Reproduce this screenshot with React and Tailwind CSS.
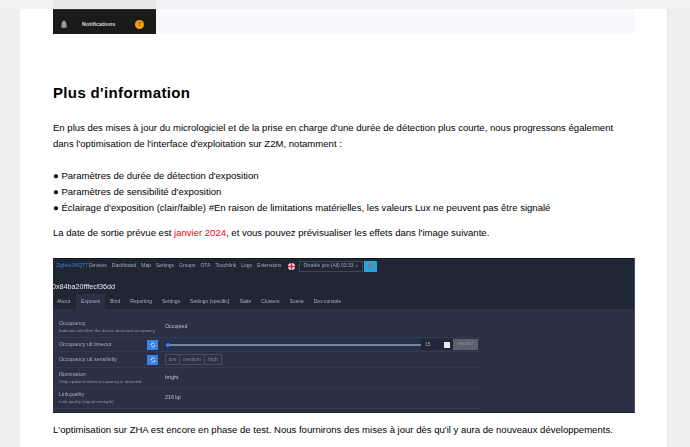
const Row = ({ h, label, sub, btn, children }) => (
  <div className={`flex items-center border-b border-[#33394f] ${h}`}>
    <div className="w-[94px] shrink-0 pl-[6px]">
      <div className="text-[5.3px] leading-[7px] whitespace-nowrap text-[#a9adb8]">{label}</div>
      {sub && <div className="text-[4.4px] leading-[7px] whitespace-nowrap text-[#9297a4]">{sub}</div>}
    </div>
    <div className="w-[11px] shrink-0">
      {btn && (
        <div className="flex h-[10px] w-[11px] items-center justify-center bg-[#3b82e6]">
          <svg width="6" height="6" viewBox="0 0 24 24" fill="none" stroke="#dfe8f8" strokeWidth="4">
            <path d="M4 12a8 8 0 0 1 14-5M20 12a8 8 0 0 1-14 5" />
          </svg>
        </div>
      )}
    </div>
    <div className="flex min-w-0 flex-1 items-center pl-[7px] pr-[3px]">{children}</div>
  </div>
);

export default function App() {
  const nav = ["Devices", "Dashboard", "Map", "Settings", "Groups", "OTA", "Touchlink", "Logs", "Extensions"];
  const tabs = ["Bind", "Reporting", "Settings", "Settings (specific)", "State", "Clusters", "Scene", "Dev console"];
  return (
    <div className="h-[447px] w-[690px] overflow-hidden bg-[#efefef] font-['Liberation_Sans',Arial,sans-serif]">
      <div className="h-[9px] bg-[#f2f2f2] px-[53px]">
        <div className="h-full w-[103px] bg-[#e8e8e8]" />
      </div>
      <div className="mx-[20px] h-[438px] w-[648px] border-r border-[#e6e6e6] bg-white px-[33px] text-black">
        <div className="flex h-[25px] w-[582px] bg-[#f8f9fd]">
          <div className="flex h-full w-[103px] items-center border-t border-[#333] bg-[#1a1a1a] pl-[6px] pt-[4px]">
            <svg width="10" height="11" viewBox="0 0 24 24" fill="#9a9a9a">
              <path d="M12 2c-1 0-2 1-2 2-3 1-4 4-4 7v5l-2 3h16l-2-3v-5c0-3-1-6-4-7 0-1-1-2-2-2zM10 20h4a2 2 0 0 1-4 0z" />
            </svg>
            <span className="ml-[13px] w-[48px] text-[5.5px] font-bold text-[#d8d8d8]">Notifications</span>
            <span className="ml-[5px] flex h-[9px] w-[9px] items-center justify-center rounded-full bg-[#f39c12] text-[6px] font-bold leading-none text-[#5a3a00]">!</span>
          </div>
        </div>

        <h2 className="mt-[50px] text-[15px] font-bold leading-[18px] tracking-[0.35px]">Plus d'information</h2>

        <p className="mt-[18px] text-[9.55px] leading-[16px] whitespace-nowrap">
          En plus des mises à jour du micrologiciel et de la prise en charge d'une durée de détection plus courte, nous progressons également
          <br />
          dans l'optimisation de l'interface d'exploitation sur Z2M, notamment :
        </p>
        <div className="mt-[16px] text-[9.55px] leading-[16px] whitespace-nowrap">
          <div>● Paramètres de durée de détection d'exposition</div>
          <div>● Paramètres de sensibilité d'exposition</div>
          <div>● Éclairage d'exposition (clair/faible) #En raison de limitations matérielles, les valeurs Lux ne peuvent pas être signalé</div>
        </div>
        <p className="mt-[9px] text-[9.55px] leading-[16px] whitespace-nowrap">
          La date de sortie prévue est <span className="text-[#f5000f]">janvier 2024</span>, et vous pouvez prévisualiser les effets dans l'image suivante.
        </p>

        <div className="mt-[17px] h-[155px] w-[582px] overflow-hidden border-r border-t border-r-[#4a5060] border-t-[#10141c] bg-[#2b3045] blur-[0.3px]">
          <div className="h-[50px] bg-[#1f2634]">
            <div className="flex h-[13px] items-center pl-[3px] pt-[1px] text-[5px] whitespace-nowrap text-[#a4a9b3]">
              <span className="w-[33px] text-[#3f7ed0]">Zigbee2MQTT</span>
              <div className="flex gap-[5px]">
                {nav.map((n) => <span key={n}>{n}</span>)}
              </div>
              <svg className="ml-[6px]" width="7" height="7" viewBox="0 0 10 10">
                <circle cx="5" cy="5" r="5" fill="#e8e8ee" />
                <path d="M4 0h2v4h4v2H6v4H4V6H0V4h4z" fill="#d9263f" />
              </svg>
              <div className="ml-[4px] flex h-[11px] w-[64px] items-center justify-between border border-[#3f4657] px-[4px]">
                <span>Disable join (All) 03:33</span><span className="text-[3px]">▾</span>
              </div>
              <div className="ml-[1px] flex h-[11px] w-[13px] items-center justify-center bg-[#2aa3dc]">
                <div className="h-[4px] w-[4px] rounded-[1px] bg-[#6f7f90]" />
              </div>
            </div>
            <div className="mt-[9px] -ml-[1px] h-[11px] text-[7.2px] leading-[11px] text-[#e8e8ec]">0x84ba20fffecf36dd</div>
            <div className="mt-[2px] flex h-[15px] items-center text-[5px] whitespace-nowrap text-[#a9adb8]">
              <span className="pl-[4px] pr-[6px]">About</span>
              <span className="flex h-full items-center bg-[#2b3045] px-[5px]">Exposes</span>
              {tabs.map((t) => (
                <span key={t} className="px-[5px]">{t}</span>
              ))}
            </div>
          </div>

          <div className="mt-[7px] w-[428px]">
            <Row h="h-[22px]" label="Occupancy" sub="Indicates whether the device detected occupancy">
              <span className="text-[5.3px] text-[#c0c3cc]">Occupied</span>
            </Row>
            <Row h="h-[14px]" label="Occupancy ult timeout" btn>
              <div className="flex h-[11px] flex-1 items-center bg-[#233150]">
                <div className="ml-[1px] h-[4px] w-[4px] rounded-full bg-[#3b82f6]" />
                <div className="h-[2px] flex-1 bg-[#7d838e]" />
              </div>
              <div className="flex h-[11px] w-[32px] items-center bg-[#20273a] pl-[4px] text-[5px] text-[#a9adb8]">
                <span className="flex-1">15</span>
                <span className="mr-[3px] h-[6px] w-[6px] bg-[#e8eaf0]" />
              </div>
              <div className="flex h-[11px] w-[25px] items-center justify-center bg-[#5a606e] text-[4.6px] text-[#8b909b]">second</div>
            </Row>
            <Row h="h-[16px]" label="Occupancy ult sensitivity" btn>
              <div className="flex h-[11px] text-[5px] text-[#80858f]">
                <span className="flex w-[15px] items-center justify-center border border-[#474d60]">low</span>
                <span className="flex w-[25px] items-center justify-center border-y border-r border-[#474d60]">medium</span>
                <span className="flex w-[17px] items-center justify-center border-y border-r border-[#474d60]">high</span>
              </div>
            </Row>
            <Row h="h-[20px]" label="Illumination" sub="Only updated when occupancy is detected">
              <span className="text-[5.3px] text-[#c0c3cc]">bright</span>
            </Row>
            <Row h="h-[21px]" label="Linkquality" sub="Link quality (signal strength)">
              <span className="text-[5.3px] text-[#c0c3cc]">216 lqi</span>
            </Row>
          </div>
          <div className="mt-[3px] border-b border-[#1c2230]" />
        </div>

        <p className="mt-[9px] text-[9.55px] leading-[16px] whitespace-nowrap">
          L'optimisation sur ZHA est encore en phase de test. Nous fournirons des mises à jour dès qu'il y aura de nouveaux développements.
        </p>
      </div>
    </div>
  );
}
